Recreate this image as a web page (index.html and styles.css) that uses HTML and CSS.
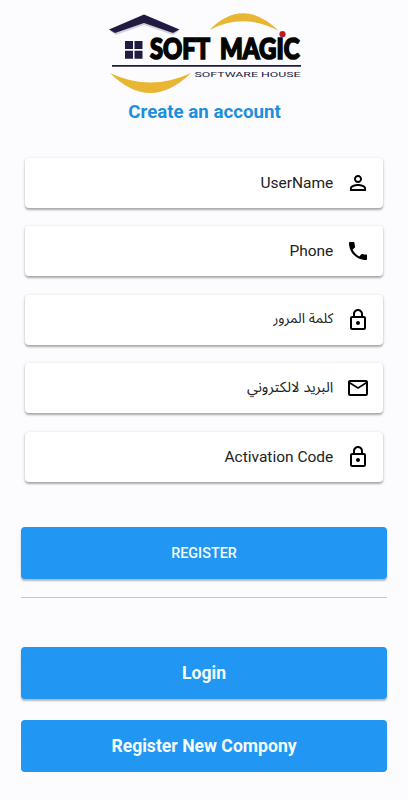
FILE: index.html
```html
<!DOCTYPE html>
<html lang="en">
<head>
<meta charset="utf-8">
<meta name="viewport" content="width=device-width">
<title>Create an account</title>
<link rel="stylesheet" href="styles.css">
</head>
<body>
<main class="page">
  <svg class="logo" viewBox="104 8 200 90" role="img" aria-label="Soft Magic Software House">
    <path class="roof-shadow" d="M110 31 144 17 179 31 173 35 144 25 116 35Z"/>
    <path class="navy" d="M109 29.500 144 14.500 179.500 29.500 173 33 144 23 115 33Z"/>
    <path class="navy" d="M125 41h8v8h-8zM134.500 41h8v8h-8zM125 50.800h8v8h-8zM134.500 50.800h8v8h-8z"/>
    <path class="gold" d="M209.500 30Q243-4 279 31Q243 12 209.500 30Z"/>
    <path class="gold" d="M110 73Q150 113 191 73Q150 92 110 73Z"/>
    <text class="brand" x="150" y="59.300" textLength="60" lengthAdjust="spacingAndGlyphs">SOFT</text>
    <text class="brand" x="220" y="59.300" textLength="79.500" lengthAdjust="spacingAndGlyphs">MAGIC</text>
    <circle class="dot" cx="282.500" cy="34.200" r="3.100"/>
    <path class="navy" d="M112 65h189v1.700H112z"/>
    <text class="tagline" x="194.500" y="77" textLength="106" lengthAdjust="spacingAndGlyphs">SOFTWARE HOUSE</text>
  </svg>
  <h1 class="title">Create an account</h1>
  <form class="fields">
    <div class="field"><span>UserName</span>
      <svg class="icon" viewBox="0 0 24 24"><path d="M12 5.900a2.100 2.100 0 1 1 0 4.200 2.100 2.100 0 0 1 0-4.200m0 9c2.970 0 6.100 1.460 6.100 2.100v1.100H5.900V17c0-.64 3.130-2.100 6.100-2.100M12 4C9.790 4 8 5.790 8 8s1.790 4 4 4 4-1.790 4-4-1.790-4-4-4zm0 9c-2.670 0-8 1.340-8 4v3h16v-3c0-2.660-5.330-4-8-4z"/></svg>
    </div>
    <div class="field"><span>Phone</span>
      <svg class="icon" viewBox="0 0 24 24"><path d="M6.620 10.790c1.440 2.830 3.760 5.140 6.590 6.590l2.200-2.200c.27-.27.67-.36 1.020-.24 1.120.37 2.330.57 3.570.57.550 0 1 .45 1 1V20c0 .55-.45 1-1 1-9.390 0-17-7.610-17-17 0-.55.45-1 1-1h3.500c.55 0 1 .45 1 1 0 1.250.2 2.450.57 3.570.11.350.03.740-.25 1.020l-2.200 2.200z"/></svg>
    </div>
    <div class="field arabic password"><span lang="ar" dir="rtl">كلمة المرور</span>
      <svg class="icon" viewBox="0 0 24 24"><path d="M18 8h-1V6c0-2.760-2.240-5-5-5S7 3.240 7 6v2H6c-1.100 0-2 .9-2 2v10c0 1.100.9 2 2 2h12c1.100 0 2-.9 2-2V10c0-1.100-.9-2-2-2zM9 6c0-1.660 1.340-3 3-3s3 1.340 3 3v2H9V6zm9 14H6V10h12v10zm-6-3c1.100 0 2-.9 2-2s-.9-2-2-2-2 .9-2 2 .9 2 2 2z"/></svg>
    </div>
    <div class="field arabic"><span lang="ar" dir="rtl">البريد لالكتروني</span>
      <svg class="icon" viewBox="0 0 24 24"><path d="M20 4H4c-1.100 0-1.990.9-1.990 2L2 18c0 1.100.9 2 2 2h16c1.100 0 2-.9 2-2V6c0-1.100-.9-2-2-2zm0 14H4V8l8 5 8-5v10zm-8-7L4 6h16l-8 5z"/></svg>
    </div>
    <div class="field"><span>Activation Code</span>
      <svg class="icon" viewBox="0 0 24 24"><path d="M18 8h-1V6c0-2.760-2.240-5-5-5S7 3.240 7 6v2H6c-1.100 0-2 .9-2 2v10c0 1.100.9 2 2 2h12c1.100 0 2-.9 2-2V10c0-1.100-.9-2-2-2zM9 6c0-1.660 1.340-3 3-3s3 1.340 3 3v2H9V6zm9 14H6V10h12v10zm-6-3c1.100 0 2-.9 2-2s-.9-2-2-2-2 .9-2 2 .9 2 2 2z"/></svg>
    </div>
  </form>
  <div class="actions">
    <button class="button register">REGISTER</button>
    <hr class="divider">
    <button class="button login">Login</button>
    <button class="button company">Register New Compony</button>
  </div>
</main>
</body>
</html>
```
FILE: styles.css
```css
* { box-sizing: border-box; }
body {
  margin: 0;
  background: #fcfcfe;
  font-family: Roboto, "Noto Sans", sans-serif;
}
.page {
  width: 408px;
  height: 800px;
  padding: 8px 21px 0;
  overflow: hidden;
  display: flex;
  flex-direction: column;
}
.logo {
  width: 200px;
  height: 90px;
  margin-left: 83px;
  flex: none;
}
.navy { fill: #211b42; }
.roof-shadow { fill: #aaa8b5; opacity: .5; }
.gold { fill: #e8b632; }
.dot { fill: #b51f24; }
.brand { font: 900 28px Lato, sans-serif; fill: #050505; stroke: #050505; stroke-width: 1.700px; }
.tagline { font: 400 8px Roboto, sans-serif; fill: #211b42; }
.title {
  margin: 0 0 0 1px;
  height: 28px;
  line-height: 28px;
  text-align: center;
  font-size: 18.700px;
  font-weight: 700;
  color: #1c8edb;
}
.fields {
  display: flex;
  flex-direction: column;
  gap: 18.500px;
  margin: 31.500px 4px 0;
}
.field {
  height: 50px;
  padding: 0 13px 0 16px;
  display: flex;
  align-items: center;
  justify-content: flex-end;
  gap: 12.700px;
  border-radius: 4px;
  background: #fff;
  box-shadow: 0 1.500px 2px rgba(0, 0, 0, .28), 0 1px 4px rgba(0, 0, 0, .1);
  font-size: 15.500px;
  color: #222;
}
.arabic span { font-family: "Noto Sans Arabic", "DejaVu Sans", sans-serif; font-size: 14.700px; margin-top: -2px; }
.password span { font-size: 13.900px; }
.icon { width: 24px; height: 24px; fill: #000; }
.actions { display: flex; flex-direction: column; margin-top: 45.500px; }
.button {
  height: 52px;
  border: 0;
  padding: 0;
  border-radius: 4px;
  background: #2196f3;
  box-shadow: 0 2px 2px rgba(0, 0, 0, .28);
  color: #f4fdff;
  font: 700 17.600px Roboto, sans-serif;
}
.register { font-size: 14.400px; font-weight: 500; }
.divider { width: 100%; height: 1px; margin: 18px 0 49px; border: 0; background: #a9ccd5; }
.company { margin-top: 21px; box-shadow: none; }
```
